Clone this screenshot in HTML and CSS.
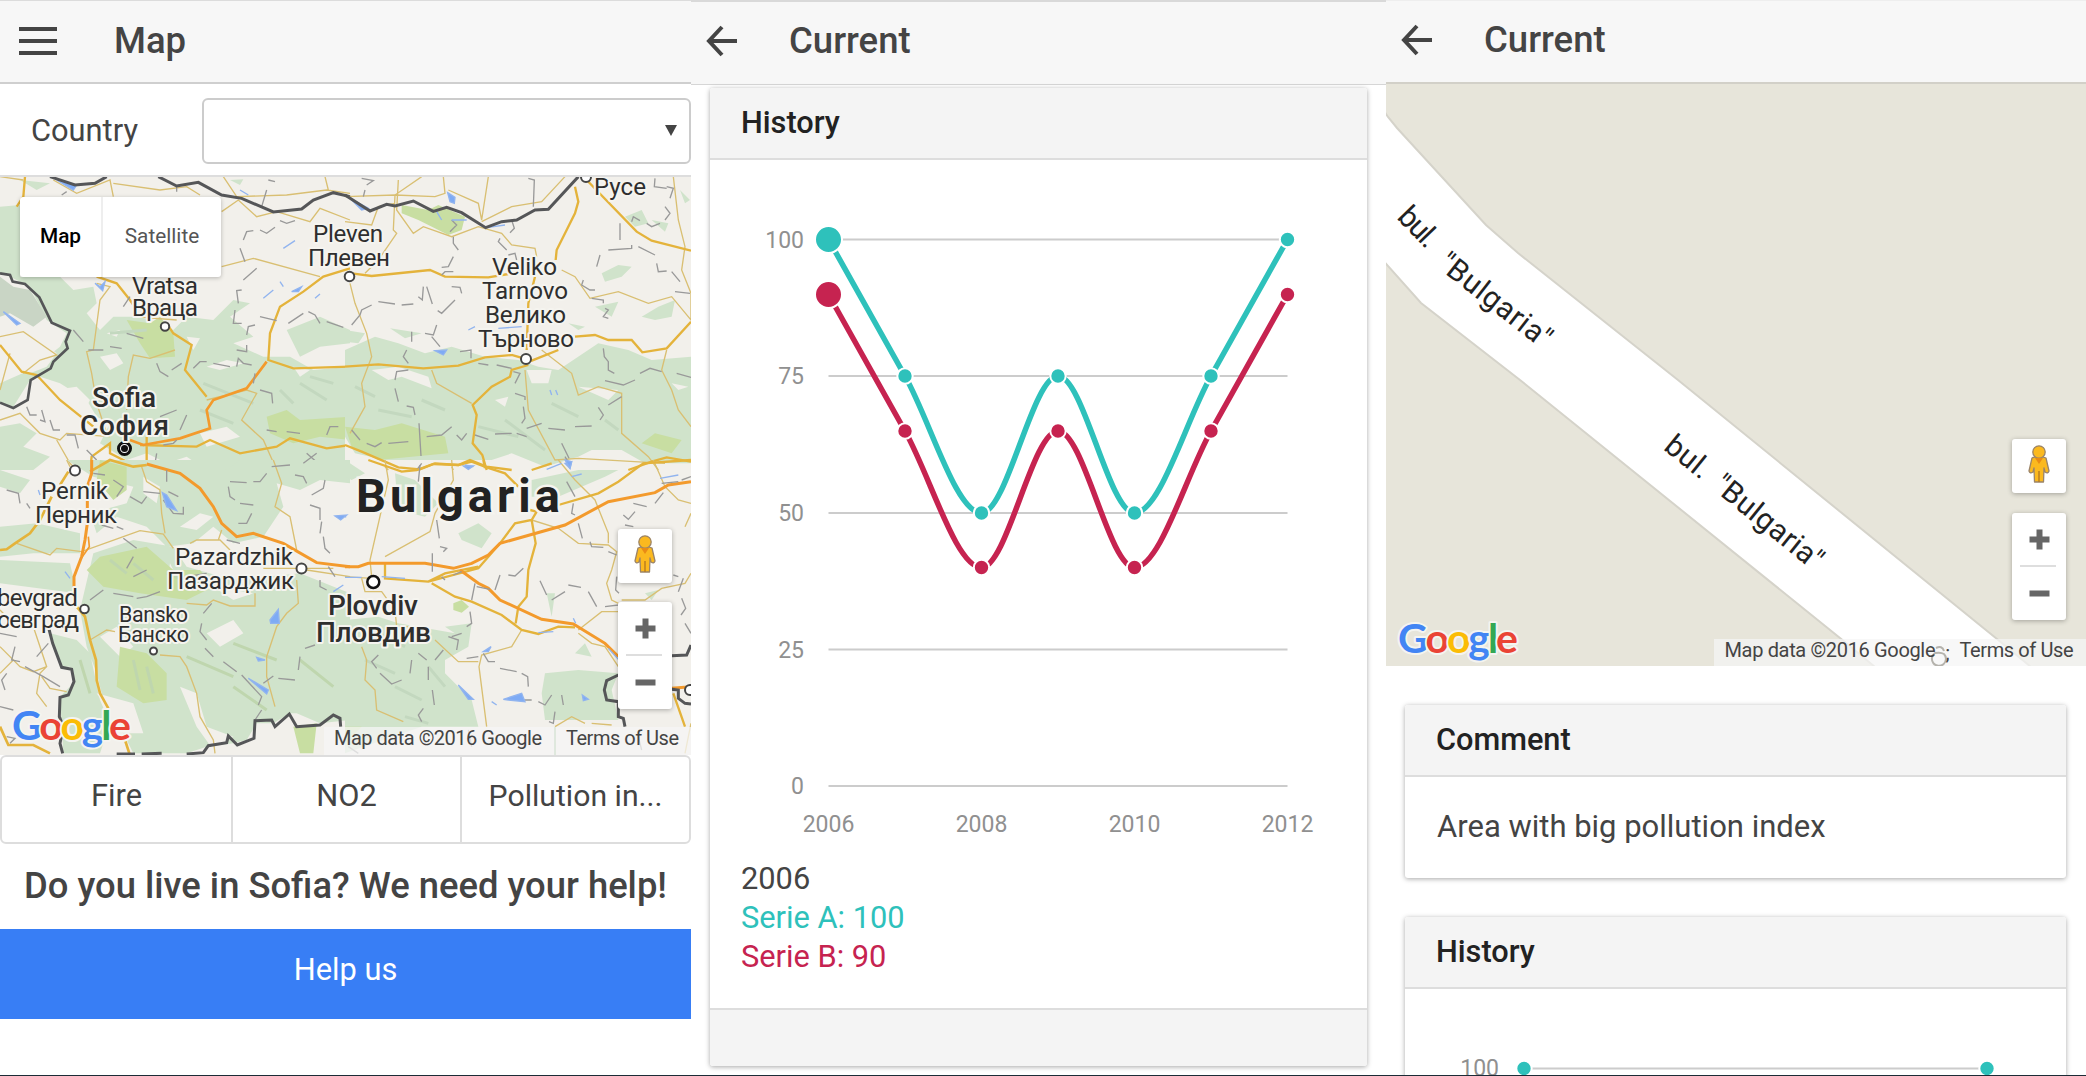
FILE: index.html
```html
<!DOCTYPE html>
<html lang="en">
<head>
<meta charset="utf-8">
<title>Pollution map</title>
<link rel="stylesheet" href="styles.css">
</head>
<body>
<svg class="defs" width="0" height="0" aria-hidden="true">
  <symbol id="back" viewBox="0 0 32 32"><path d="M31 16H3M16 2 3 16 16 30" fill="none" stroke="#444" stroke-width="4"/></symbol>
  <symbol id="pegman" viewBox="0 0 54 54">
    <g fill="#fbb91f" stroke="#9b8468" stroke-width="1.3" stroke-linejoin="round">
      <path d="M20 19q7-3 14 0l3 13q-1 3-4 1l-1-4-.5 14h-9L22 29l-1 4q-3 2-4-1z"/>
      <circle cx="27" cy="13" r="6.2"/>
    </g>
    <path d="M23 19h8l-4 6z" fill="#e98b15"/><path d="M27 32v11" stroke="#b57a22" stroke-width="1.4"/>
  </symbol>
  <symbol id="zoom" viewBox="0 0 54 107">
    <path d="M17.500 26.500h20M27.500 16.500v20M17.500 80.500h20" stroke="#666" stroke-width="6"/>
    <path d="M8 53h36" stroke="#dedede" stroke-width="2"/>
  </symbol>
</svg>
<main class="screens">

  <section class="screen">
    <header class="bar">
      <svg class="burger" viewBox="0 0 38 28"><path d="M0 2h38M0 14h38M0 26h38" stroke="#444" stroke-width="4"/></svg>
      <h1 class="title title-map">Map</h1>
    </header>
    <div class="field">
      <label class="field-label" for="country">Country</label>
      <div class="select" id="country"><span class="caret"></span></div>
    </div>
    <div class="map map-country">
      <svg class="canvas" viewBox="0 177 691 578">
        <rect y="177" width="691" height="578" fill="#f2f0eb"/>
        <g transform="translate(0 170) scale(.33333)">
          <g fill="#d0e3cb">
            <path d="M0 110 60 105 60 320H180L220 360 280 350 290 400 260 430 300 480 340 440 420 440 520 480 560 440 640 450 700 390 750 400 690 440 760 500 700 520 790 560 870 560 940 600 1050 590V900H620L560 860 500 880 440 850 380 870 300 820 330 760 290 740 260 690 180 640 120 620 90 630 40 710 0 700V640L90 600 180 530 200 490 140 450 90 350 30 320 0 310z"/>
            <path d="M0 770 60 760 110 790 70 830 150 860 100 900H0zM690 30 730 28 720 45zM860 480 960 440 1050 480V520L960 530 900 560zM60 30 150 40 110 60z"/>
          </g>
          <g fill="#f2f0eb">
            <path d="M10 500 60 480 120 510 170 550 140 590 90 610 50 590zM300 560 350 550 370 580 330 600zM320 490 360 480 350 500zM620 590 680 570 730 580 660 600zM560 500 600 505 580 540zM160 660 230 650 270 690 250 730 190 700zM600 790 680 770 720 800 620 830zM880 590 930 600 900 620z"/>
          </g>
          <path d="M0 320 40 350 90 360 140 440 100 470 30 430 0 440z" fill="#c9d5c5"/>
          <path d="M380 450 450 460 480 440 520 490 525 560 450 565 420 520zM800 740 860 720 900 750 1050 740V810L960 800 880 820 810 790zM330 890 380 870 400 900z" fill="#c8dea2"/>
          <path d="M330 490 440 480M610 640 760 700M900 640 980 690M600 720 700 760M930 620 1000 640M840 660 880 700" stroke="#c3d8bf" stroke-width="9" fill="none"/>
          <g fill="none" stroke="#d9bf72" stroke-width="4">
            <path d="M0 20 70 30M160 30 230 70 330 30 340 80M340 40 480 60 560 50 600 75M670 20 710 80 860 75 980 60 1050 70M975 20 985 60M665 125 715 90 770 140 830 125 930 155 960 115 1050 150M665 290 760 265 960 320M0 500 70 485 170 555 120 570 70 610M30 550 0 660M290 340 330 350 300 390 280 540 260 545 275 610 290 700 320 790M400 440 530 450M525 540 450 565 400 555 385 620 380 720M0 750 60 730 120 790 180 810 200 790 330 800M170 810 210 880 230 900M620 690 740 660 770 670 725 750 790 810 830 900"/>
          </g>
          <g fill="none" stroke="#e4b33b" stroke-width="7">
            <path d="M75 20 70 80 50 110M290 320 350 340 390 390 410 420M500 460 520 490 575 525 555 600 620 680M0 525 65 605 110 615 180 690 280 770M420 825 590 830 630 810 720 850 830 830 870 805 980 835 1050 825M1050 295 970 320 910 365 840 410 810 490 805 570 880 595 1050 590M270 900 275 860 330 820 330 850 400 885 440 885M440 800V880"/>
          </g>
          <path d="M390 810 430 825 540 805 630 775 620 720 640 690 740 655 800 575" fill="none" stroke="#f39a2c" stroke-width="8"/>
          <g fill="none" stroke="#999" stroke-width="4">
            <path d="M730 210 740 185 760 182M780 180 800 190 825 172M840 152 860 160 885 152M720 235 735 275M770 295 730 330M725 360 710 362 715 400M705 420 700 460 725 460M740 495 745 470 765 465M780 440 830 452M865 460 910 430M925 425 945 435 960 460M980 455 1030 472M710 540 740 545 740 525M580 595 600 575 620 575M640 580 690 590M710 590 715 565 730 580 755 585M470 580 480 605 505 620M515 600 545 580M380 490 430 505M330 530 365 535M265 540 310 540M220 480 250 515M765 610 760 640M780 660 815 670 818 700M800 780 830 785M860 785 900 790M980 795 990 770 1015 770M920 850 960 885M820 890 870 885M560 735 540 780M480 740 530 720M490 825 520 820 530 810M80 710 90 735 110 735M120 750 135 755 125 720M150 750 160 780 180 780M200 795 225 795 235 835M260 840 290 870M470 850 465 880M370 410 390 380M805 30 825 35M185 75 200 65M785 110 800 60M530 45V65"/>
          </g>
          <path d="M285 340 300 350 315 335 308 362zM10 425 60 460 50 465zM170 30 230 45 220 60zM720 60 745 75M790 385 820 360M850 235 885 212M875 365 905 350 895 365zM840 335 850 350M945 385 960 372" fill="#7eabf5" stroke="#91b4ef" stroke-width="4"/>
          <path d="M150 20 225 45 285 40 320 20M475 20 530 48 595 37 665 75 725 85 820 126 905 117 940 90 1000 68 1050 80" fill="none" stroke="#555658" stroke-width="9"/>
          <path d="M0 310 30 315 38 335 75 342 118 382 155 458 210 482 197 515 203 535 160 575 152 595 92 630 83 690 40 714 0 698" fill="none" stroke="#555658" stroke-width="8"/>
        </g>
        <g transform="translate(345 170) scale(.33333)">
          <g fill="#d0e3cb">
            <path d="M0 540 90 500 160 520 240 550 320 530 420 560 520 570 580 590 640 600 760 520 850 540 920 570 1038 560V880H900L830 840 740 840 700 860 600 890 500 850 440 870H0zM0 480 60 490 40 520 0 515zM135 475 230 490 180 505zM770 310 820 285 860 290 830 320 780 335zM890 440 940 410 990 390 980 440 930 450zM750 410 820 395 800 440zM670 460 720 470 700 480zM840 140 890 120 910 160 870 170zM920 150 970 160 960 185zM1005 60 1035 90 1020 100z"/>
          </g>
          <path d="M80 600 160 590 250 620 260 655 170 620 130 630zM0 800 30 850 120 870 80 890 0 870zM545 600 620 600 610 640 560 640zM700 650 820 660 790 690zM450 690 490 680 480 710zM980 640 1030 650 1000 660z" fill="#f2f0eb"/>
          <path d="M170 105 250 120 280 105 360 140 350 180 310 195 220 150 170 130zM0 770 90 780 170 760 300 800 310 850 200 860 100 870 20 830zM890 820 930 790 1010 810 980 850z" fill="#c8dea2"/>
          <path d="M100 720 200 740M230 690 300 720M30 650 90 680M400 770 520 800M480 750 600 840M620 700 700 740M780 750 820 780" stroke="#c3d8bf" stroke-width="9" fill="none"/>
          <g fill="none" stroke="#d9bf72" stroke-width="4">
            <path d="M0 80 150 75 270 80 300 70 295 20M230 20 150 75 145 180 155 190 100 270 60 310M160 30 155 120 205 190 235 170 320 200 400 170 470 190 500 225 570 235 575 260M310 60 400 100 410 150 430 20M410 155 500 110 590 95 660 20M0 155 80 165 100 110 150 100M15 340 30 400 65 490 80 560 50 640 60 710 15 790M985 20 1000 150 1020 230 1010 300 1038 370V450L980 380 910 400 820 365 735 385 690 320 650 300M965 540 950 600 980 660 1000 720 1038 770M590 540 680 610 700 675 760 650 830 670 830 790 910 860 940 900M260 600 275 640 380 700M540 600 550 720 630 870 700 865 960 880M120 890 130 900M320 890 325 900"/>
          </g>
          <g fill="none" stroke="#e4b33b" stroke-width="7">
            <path d="M20 310 80 318 255 300 300 320 430 322 490 312M690 50 700 95 690 130 635 240 632 270M725 30 875 185 920 212 1038 242M570 320 550 400 545 540M690 500 750 495 790 510 860 510 892 547 965 535 1038 455M0 590 100 583 235 595 340 587 420 562 500 555 560 572 640 540M550 585 500 600 495 620 440 650 383 705 395 735 383 820 412 855 425 900M0 825 50 845 160 892 225 898 270 880 340 885 375 870 425 890 500 900M560 900 620 880M850 900 920 875 965 862 1038 875"/>
          </g>
          <g fill="none" stroke="#999" stroke-width="4">
            <path d="M50 25 85 32 65 45M60 60 55 80M550 25 568 30 565 110M320 150 335 165 315 185M325 200 325 220 340 240M325 260 310 290 290 292M290 315 300 305 325 305M465 205 460 215 485 240M490 255 510 250 515 270M500 150 508 175 495 188M320 350 345 352 350 370M330 390 290 430 278 422M235 350 232 390 220 380M245 350 262 402M100 395 150 402M170 405 205 402M80 405 50 420 45 435 20 465M200 485 200 515M275 465 265 495 240 490M260 500 285 530M345 545 378 540 378 565M185 540 175 560 190 580M400 580 430 585M455 585 500 595M505 605 525 610 510 640M510 670 540 680 540 690M535 710 540 745 530 760M190 600 155 605 150 630M150 655 160 695M185 708 205 712 210 735M20 780 45 810M65 820 90 830 110 818M130 820 190 815M222 760 228 858M215 900 230 880M245 800 290 795 320 770M335 795 350 810 365 790M390 795 430 808M450 792 500 790M515 790 545 800M545 775 590 760M610 775 660 780M690 770 740 768M760 712 775 735 765 750M790 705 830 680M780 632 835 645 870 630M885 610 915 595 950 605M995 610 1038 622M775 535 778 560 790 575 790 600 808 610M780 415 790 420 775 440 790 445M740 385 775 390 775 400M715 330 710 345 735 360 750 360M825 160V210M860 155 865 140 885 152M905 160 920 170 945 160M960 110 975 130 960 150M965 50 985 55 975 85M930 25 928 50 965 55M765 255 755 290M790 240 860 235 860 225M880 230 930 255M935 280 940 305 965 303M980 305 1005 335M990 365 1035 370M650 820 672 865M660 860 675 885"/>
          </g>
          <path d="M308 68 330 82 328 100 315 95zM270 542 305 540 295 555zM355 888 385 888 370 898zM660 880 680 875 675 895zM15 85 70 115 50 120zM275 125 290 150M320 150 365 150M430 172 480 165M370 480 390 470M460 475 530 470M615 660 620 675M632 660 638 675" fill="#7eabf5" stroke="#91b4ef" stroke-width="4"/>
          <path d="M0 75 75 123 125 103 150 108 205 93 265 124 305 112 350 128 422 173 470 155 515 150 570 120 610 118 700 20" fill="none" stroke="#555658" stroke-width="9"/>
        </g>
        <g transform="translate(0 460) scale(.33333)">
          <g fill="#d0e3cb">
            <path d="M0 30 90 60 60 100 0 80zM200 0 620 0 680 30 720 0 1050 0V70L960 60 900 90 830 70 850 140 790 230 700 250 640 200 580 250 500 260 440 200 350 170 290 220 270 160 380 130 400 80 280 50zM0 200 110 190 240 220 240 280 100 280 0 290zM280 280 400 240 520 260 560 320 700 360 900 340 1050 400V780L960 790 890 760 870 760 820 790 770 790 740 840 700 850 620 860 560 880 400 880 350 780 310 720 290 640 260 560 240 450zM0 300 210 310 230 400 0 370zM150 520 230 540 270 580 300 720 330 790 300 880H190L180 710 220 670 210 620 180 620z"/>
          </g>
          <path d="M430 50 480 80 470 130 430 100zM540 200 600 160 640 170 590 210zM300 530 350 500 400 560 360 590zM620 520 700 480 730 520 660 560zM290 700 400 730 430 820 370 820zM540 680 590 700 620 800 700 830 640 870 590 800zM850 260 920 330 990 350 1050 345V240L980 220zM640 380 760 400 700 420zM510 310 540 370 500 380z" fill="#f2f0eb"/>
          <path d="M300 0 380 20 380 90 340 120 290 60zM300 290 440 260 520 330 600 330 640 380 560 420 420 400 310 380 260 330zM360 560 440 580 500 640 500 720 430 730 350 680zM880 800 950 790 940 880 900 880z" fill="#c8dea2"/>
          <path d="M330 300 380 340M400 310 460 360M500 340 580 370M400 600 420 690M440 620 460 700M700 550 830 600M900 600 1000 680M560 590 700 650M700 680 800 750M240 600 270 700" stroke="#bfd6ae" stroke-width="9" fill="none"/>
          <g fill="none" stroke="#d9bf72" stroke-width="4">
            <path d="M200 0 210 20M50 250 150 285 170 265 245 275 370 230 420 212 490 222 520 265M425 20 440 65 480 90 485 160 495 220M570 250 590 240 660 240 690 270M665 210 655 240M820 0 845 70 825 140 870 170 890 270M790 325 1000 325M920 330 1050 350M560 430 620 435 640 420 690 438 765 438 765 400M890 360 895 430 860 460 830 500 800 590 800 650 825 740M270 540 320 510 345 515M480 585 540 590 560 620 590 700 600 770 640 840 645 880M0 450 20 470M100 500 140 620 120 640 110 700 140 740M0 560 60 620 100 635 140 620M125 650 150 685 200 695M0 640 40 600"/>
          </g>
          <g fill="none" stroke="#e4b33b" stroke-width="8">
            <path d="M205 35 180 75M270 35 330 0 400 20 440 15M155 110 120 180 90 220 45 250 20 268 0 270M230 440 255 470 270 540 288 600 290 660 300 700 325 745M0 800 25 855 100 855 150 880M375 840 388 880"/>
          </g>
          <path d="M275 0V40L262 80V190L255 240 245 290 222 350 222 385M440 12 540 40 600 85 640 140 665 190 710 230 760 220 850 250 950 308 1050 320" fill="none" stroke="#f39a2c" stroke-width="9"/>
          <path d="M265 230 268 260 240 300" fill="none" stroke="#f39a2c" stroke-width="5"/>
          <g fill="none" stroke="#999" stroke-width="4">
            <path d="M20 90 55 100 60 130M80 130 90 145M340 60 370 80 350 110M280 40 315 45M390 110 425 130 440 110M430 95 480 100M500 30V65M505 95 535 110M490 120 520 160 550 162V140M685 80 690 110 705 120M690 65 740 68M760 65 780 65 800 40M720 130 760 135M755 160 740 190 715 190M815 20 870 15M885 45 910 50 920 70M975 60 970 85 935 105M930 135 960 145 960 180M965 185 960 220M970 230 975 265 990 280M985 320 1005 350M960 360 960 380 980 390M370 235 410 265M400 290 380 325M400 350 440 330M270 420 310 390M340 400 400 410M410 415 440 410 480 395M560 350 620 340M610 460 635 430M605 490 600 515 620 540M615 565 640 590M670 605 710 635M725 645 785 710 775 735M790 670 820 648M835 655 885 660M900 590 895 630M915 565 945 555M765 780 785 750M350 200 370 208M305 195 340 205M45 560 35 600 60 605M110 590 145 550M0 520 50 530M20 640 5 660 15 690M0 740 40 750M75 620 130 650 180 680M20 830 45 835 30 850M680 240 720 250M910 10 950 -20"/>
          </g>
          <path d="M487 98 500 105 530 152 500 140zM810 480 835 448 838 490 812 490zM1005 168 1040 165 1022 180zM770 592 795 600 775 603zM745 655 805 690 800 702zM195 335 210 355M1000 395 1030 375M115 90 120 105" fill="#7eabf5" stroke="#91b4ef" stroke-width="4"/>
          <path d="M145 500 158 550 185 622 215 628 222 665 205 705 180 712 178 770 190 800 180 850 188 880M350 882H405M425 882 485 880M560 882 610 878 625 857 680 848 685 828 712 855 762 835 765 782 815 780 825 800 868 762 890 800 960 795 1000 765 1020 775 1022 800" fill="none" stroke="#555658" stroke-width="9"/>
        </g>
        <g transform="translate(345 460) scale(.33333)">
          <path d="M0 0 60 40 20 60 0 50zM150 40 210 60 280 130 240 170 160 150zM560 60 700 30 820 30 780 50 640 110 560 110zM340 220 400 190 440 220 410 265 350 240zM0 480 100 470 160 490 330 520 380 490 370 560 300 600 300 640 380 720 400 800H0zM300 500 380 490 360 540zM600 640 700 630 820 640 800 690 820 780 600 780 590 700zM690 580 720 550 740 590zM605 400 630 400 620 470zM900 400 940 390 920 420zM0 800 230 800 0 880z" fill="#d0e3cb"/>
          <path d="M325 430 350 420 372 440 350 458 325 450zM0 800 50 800 0 850z" fill="#c8dea2"/>
          <path d="M100 520 180 560M60 600 150 640M150 680 230 720M250 620 300 680M180 770 250 790" stroke="#c3d8bf" stroke-width="9" fill="none"/>
          <g fill="none" stroke="#d9bf72" stroke-width="4">
            <path d="M120 0 130 60 75 300 80 350M320 0 325 60 270 160 255 215 120 290M50 355 60 395 110 395 150 450 155 500 190 500M0 350 80 355M560 180 640 205 700 250 790 255 815 275 800 330 785 370 800 420 820 430M640 0 690 60 750 120 790 220V250M925 0 960 80 1000 120 1038 130M1038 160 1020 200M830 420 900 420 950 385 1020 370 1038 340M700 510 770 455 820 455M530 510 500 560 410 585 402 620 425 800M270 540 340 605 400 605M50 560 65 600 60 660 90 690 95 750 175 785M700 520 740 550 780 560 820 620M630 800 680 770 720 790M740 790 800 795M1038 790 1020 880"/>
          </g>
          <g fill="none" stroke="#e4b33b" stroke-width="7">
            <path d="M70 0 170 35 215 30 265 12 340 15 380 5 425 22 480 40 520 80M415 0 420 25M640 135 760 100 820 65 895 10 1038 0M555 150 575 155 560 180 510 190 465 250 430 290 400 325 250 365 120 355 120 310M260 370 330 410 380 425 470 465 530 510 580 522 640 500 690 502M560 180 572 250 550 330 545 410 520 440 512 490M250 365 300 340 400 320M985 700 1020 800"/>
          </g>
          <path d="M0 320H40L70 310H240L325 325 380 310 430 285 465 250 660 195 790 125 930 98 970 75 1038 65M345 330 400 370 430 385 465 420 590 478 685 492 780 550 820 590M980 685 1038 680" fill="none" stroke="#f39a2c" stroke-width="9"/>
          <g fill="none" stroke="#999" stroke-width="4">
            <path d="M225 15 220 65M275 180 283 235M285 260 305 265 295 275M262 280V335M290 350 300 360M325 345 350 335M390 370 380 420M395 380 435 388M450 390 465 345M490 345 510 348 535 325M585 362 605 405M620 420 660 395M670 375 708 382M730 395 755 440M780 440 820 435M815 350 812 390 822 400M665 65 690 110M685 130 680 160 690 165M700 190 712 235M735 245 740 260 775 262M790 275 815 285M835 165 850 178 870 155M840 195 865 200M865 130 905 140M930 130 955 98M950 70 1000 65M1038 50 1010 60M375 455 380 490 365 500M310 530 340 540 335 570M350 520 320 530M365 595 400 590M415 580 430 605 450 605M465 625 515 635M530 640 548 650 550 680M530 720 560 720M580 725 600 735 620 705M650 705 655 735M630 755 625 790 612 785M100 585 80 605 95 625M105 640 140 672 170 660M200 600 195 640M220 580 245 600M250 620 250 660M262 690 268 735M235 745 220 765 230 785M270 600 295 570M985 345 1000 350M1015 355 1000 395M1010 415 1022 445 1008 465M1020 490 1038 520M10 860 40 880M370 810 380 860M880 830 890 870"/>
          </g>
          <path d="M340 675 385 718 370 718zM475 718 530 700 540 725 490 720zM415 575 438 560 430 575zM712 705 730 718 715 722zM440 725 455 735M660 0 680 5 675 25zM360 15 385 20M685 475 692 490M605 28 650 10M680 50 710 42M110 350 180 355M0 352H50M580 518 625 515M945 55 1000 45M0 168 3 172M790 565 822 600" fill="#7eabf5" stroke="#91b4ef" stroke-width="4"/>
          <path d="M820 645 785 662 778 690 785 720 820 725V770L835 775 840 800M980 587 1025 585 1038 555M980 688 1000 690 1000 715 1020 730 1038 732" fill="none" stroke="#555658" stroke-width="9"/>
        </g>
        <g fill="#fff" stroke="#444" stroke-width="2">
          <circle cx="165" cy="326.500" r="4.200"/><circle cx="349.500" cy="276.500" r="4.800"/><circle cx="526" cy="359" r="5"/><circle cx="75" cy="470.500" r="5"/><circle cx="301.500" cy="568.500" r="5"/><circle cx="84.500" cy="609" r="4.300"/><circle cx="153.500" cy="651" r="3.500"/><circle cx="373.300" cy="582" r="6" stroke="#111" stroke-width="2.500"/><circle cx="586" cy="177" r="5"/><circle cx="690" cy="690" r="5"/>
        </g>
        <path d="M125 428v15" stroke="#222" stroke-width="3"/><circle cx="124.500" cy="448.500" r="6" fill="#fff" stroke="#111" stroke-width="3"/><circle cx="124.500" cy="448.500" r="3.500" fill="#111"/>
        <g class="places">
          <text x="594" y="195" textLength="52">Русе</text>
          <text x="313" y="241.500" textLength="70">Pleven</text><text x="308" y="265.500" textLength="82">Плевен</text>
          <text x="132" y="293.500" textLength="66">Vratsa</text><text x="132" y="316" textLength="66">Враца</text>
          <text x="492" y="275" textLength="65">Veliko</text><text x="482" y="299" textLength="86">Tarnovo</text><text x="485" y="323" textLength="81">Велико</text><text x="478" y="347" textLength="96">Търново</text>
          <text x="41" y="499" textLength="67">Pernik</text><text x="35" y="523" textLength="82">Перник</text>
          <text x="175" y="565" textLength="118">Pazardzhik</text><text x="167" y="589" textLength="127">Пазарджик</text>
          <text x="-3" y="605.500" textLength="81">bevgrad</text><text x="-3" y="628" textLength="82">оевград</text>
        </g>
        <g class="places places-small"><text x="119" y="622" textLength="69">Bansko</text><text x="118" y="642" textLength="71">Банско</text></g>
        <g class="places places-city">
          <text x="92" y="407" textLength="64">Sofia</text><text x="80" y="435" textLength="89">София</text>
          <text x="328" y="614.500" textLength="90">Plovdiv</text><text x="316" y="642" textLength="115">Пловдив</text>
        </g>
        <text class="nation" x="356" y="512" textLength="204">Bulgaria</text>
        <text class="logo" x="12" y="740" textLength="119"><tspan fill="#4285f4">G</tspan><tspan fill="#ea4335">o</tspan><tspan fill="#fbbc05">o</tspan><tspan fill="#4285f4">g</tspan><tspan fill="#34a853">l</tspan><tspan fill="#ea4335">e</tspan></text>
        <path d="M324 727h367v28H324z" fill="#f5f5f5" fill-opacity=".75"/>
        <path d="M555 727v28" stroke="#c9dcc8"/>
        <g class="credit"><text x="334" y="744.500" textLength="208">Map data ©2016 Google</text><text x="566" y="744.500" textLength="113">Terms of Use</text></g>
      </svg>
      <div class="map-type"><span class="type type-on">Map</span><span class="type">Satellite</span></div>
      <div class="controls">
        <svg class="ctl peg"><use href="#pegman"/></svg>
        <svg class="ctl zoomer"><use href="#zoom"/></svg>
      </div>
    </div>
    <div class="tabs"><span class="tab">Fire</span><span class="tab">NO2</span><span class="tab tab-long">Pollution in...</span></div>
    <h2 class="ask">Do you live in Sofia? We need your help!</h2>
    <div class="help">Help us</div>
  </section>

  <section class="screen screen-mid">
    <header class="bar bar-mid">
      <svg class="back"><use href="#back"/></svg>
      <h1 class="title">Current</h1>
    </header>
    <article class="card card-history">
      <h2 class="card-head">History</h2>
      <svg class="chart" viewBox="710 160 657 700">
        <path d="M828.500 239.500h459M828.500 376h459M828.500 513h459M828.500 649.500h459M828.500 786h459" stroke="#ccc" stroke-width="2"/>
        <g class="axis" text-anchor="end"><text x="804" y="247.500">100</text><text x="804" y="384">75</text><text x="804" y="521">50</text><text x="804" y="657.500">25</text><text x="804" y="794">0</text></g>
        <g class="axis" text-anchor="middle"><text x="828.500" y="831.500">2006</text><text x="981.500" y="831.500">2008</text><text x="1134.500" y="831.500">2010</text><text x="1287.500" y="831.500">2012</text></g>
        <g fill="none" stroke-width="5.500">
          <path stroke="#c62350" d="M828.500 294.500 905 431C930.500 476.500 956 567.500 981.500 567.500S1032.500 431 1058 431 1109 567.500 1134.500 567.500 1185.500 476.500 1211 431L1287.500 294.500"/>
          <path stroke="#2ec1bb" d="M828.500 239.500 905 376C930.500 421.500 956 513 981.500 513S1032.500 376 1058 376 1109 513 1134.500 513 1185.500 421.500 1211 376L1287.500 239.500"/>
        </g>
        <g fill="#c62350" stroke="#fff" stroke-width="2"><circle cx="828.500" cy="294.500" r="13.500"/><circle cx="905" cy="431" r="7.700"/><circle cx="981.500" cy="567.500" r="7.700"/><circle cx="1058" cy="431" r="7.700"/><circle cx="1134.500" cy="567.500" r="7.700"/><circle cx="1211" cy="431" r="7.700"/><circle cx="1287.500" cy="294.500" r="7.700"/></g>
        <g fill="#2ec1bb" stroke="#fff" stroke-width="2"><circle cx="828.500" cy="239.500" r="13.500"/><circle cx="905" cy="376" r="7.700"/><circle cx="981.500" cy="513" r="7.700"/><circle cx="1058" cy="376" r="7.700"/><circle cx="1134.500" cy="513" r="7.700"/><circle cx="1211" cy="376" r="7.700"/><circle cx="1287.500" cy="239.500" r="7.700"/></g>
      </svg>
      <div class="legend"><div>2006</div><div class="serie-a">Serie A: 100</div><div class="serie-b">Serie B: 90</div></div>
      <footer class="card-foot"></footer>
    </article>
  </section>

  <section class="screen">
    <header class="bar bar-right">
      <svg class="back"><use href="#back"/></svg>
      <h1 class="title">Current</h1>
    </header>
    <div class="map map-street">
      <svg class="canvas" viewBox="1386 84 700 582">
        <path d="M1386 84h700v582h-700z" fill="#e7e5da"/>
        <path d="M1380 105 1388 117 1397 128 1486 225 1518 253 1678 380 1997 639 2031 667H1875L1840 638 1520 380 1421 303 1380 257z" fill="#fff" stroke="#d5d3ca" stroke-width="2"/>
        <g class="street">
          <text transform="translate(1396 218) rotate(46)" textLength="44">bul.</text>
          <text transform="translate(1436.500 267) rotate(38)" textLength="134">"Bulgaria"</text>
          <text transform="translate(1662.500 449) rotate(39)" textLength="194" word-spacing="5">bul. "Bulgaria"</text>
        </g>
        <text class="logo" x="1398" y="652.500" textLength="120"><tspan fill="#4285f4">G</tspan><tspan fill="#ea4335">o</tspan><tspan fill="#fbbc05">o</tspan><tspan fill="#4285f4">g</tspan><tspan fill="#34a853">l</tspan><tspan fill="#ea4335">e</tspan></text>
        <path d="M1714 639h372v27h-372z" fill="#f5f5f5" fill-opacity=".72"/>
        <path d="M1936 648q6-3 8 3M1944 654a7 7 0 1 1-9-1q6-1 9 1" fill="none" stroke="#b5b3ad" stroke-width="2"/>
        <g class="credit"><text x="1724.500" y="656.500" textLength="211">Map data ©2016 Google</text><text x="1945.500" y="660">;</text><text x="1959.500" y="656.500" textLength="114">Terms of Use</text></g>
      </svg>
      <div class="controls controls-street">
        <svg class="ctl peg"><use href="#pegman"/></svg>
        <svg class="ctl zoomer"><use href="#zoom"/></svg>
      </div>
    </div>
    <article class="card card-comment">
      <h2 class="card-head">Comment</h2>
      <p class="card-text">Area with big pollution index</p>
    </article>
    <article class="card card-next">
      <h2 class="card-head">History</h2>
      <svg class="chart-top" viewBox="1405 988 661 88">
        <path d="M1524 1067.500h463" stroke="#ccc" stroke-width="2"/>
        <g class="axis" text-anchor="end"><text x="1499" y="1075">100</text></g>
        <g fill="#2ec1bb" stroke="#fff" stroke-width="2"><circle cx="1524" cy="1067.500" r="7.700"/><circle cx="1987" cy="1067.500" r="7.700"/></g>
      </svg>
    </article>
  </section>
</main>
</body>
</html>
```
FILE: styles.css
```css
* { box-sizing: border-box; }
body { margin: 0; background: #fff; color: #444; font: 30.800px "Roboto", "Liberation Sans", sans-serif; }
.defs { display: block; width: 0; height: 0; }
h1, h2, p { margin: 0; font-weight: 500; }
.screens { display: grid; grid-template-columns: 691px 695px 700px; height: 1076px; overflow: hidden; border-bottom: 1px solid #1c2b36; }
.screen { display: flex; flex-direction: column; min-width: 0; min-height: 0; overflow: hidden; }

.bar { display: flex; align-items: center; flex: none; height: 84px; padding: 0 0 2px 19px; background: #f7f7f7; border-top: 1px solid #dcdcdc; border-bottom: 2px solid #cfcfcf; }
.bar-mid { height: 85px; padding: 0 0 4px 15px; border-bottom: 1px solid #d6d6d6; border-top: 2px solid #d9d9d9; }
.bar-right { padding: 0 0 3px 15px; border-top-color: #eee; border-bottom-color: #d2d0c8; }
.burger { width: 38px; height: 28px; margin-right: 57px; }
.back { width: 32px; height: 32px; margin-right: 51px; }
.title { font-size: 36.500px; line-height: 42px; }

.field { display: flex; align-items: center; flex: none; height: 93px; padding: 2px 0 0 31px; border-bottom: 2px solid #ddd; }
.field-label { width: 171px; }
.select { display: flex; align-items: center; justify-content: flex-end; flex: 1; height: 66px; padding-right: 12px; border: 2px solid #ccc; border-radius: 6px; }
.caret { border: 6px solid transparent; border-top: 11px solid #444; border-bottom: 0; }

.map { position: relative; flex: none; }
.map-country { height: 578px; }
.map-street { height: 582px; }
.canvas { display: block; width: 100%; height: 100%; }
.places { font-size: 24.200px; fill: #2e2e2e; stroke: #f5f4ef; stroke-width: 4px; paint-order: stroke; stroke-linejoin: round; }
.places-small { font-size: 21.500px; }
.places-city { font-size: 28px; font-weight: 500; }
.nation { font-size: 47px; font-weight: 700; fill: #222; stroke: #f5f4ef; stroke-width: 5px; paint-order: stroke; }
.logo { font: 400 41px "Lato", sans-serif; stroke: #f4f4f0; stroke-width: 4px; paint-order: stroke; stroke-linejoin: round; }
.logo tspan { font-weight: 700; }
.credit { font-size: 20px; fill: #444; }
.street { font-size: 30px; fill: #222; }

.map-type { position: absolute; left: 20px; top: 20px; display: flex; width: 201px; height: 80px; background: #fff; border-radius: 3px; box-shadow: 0 1px 4px rgba(0,0,0,.25); font-size: 20.800px; line-height: 78px; text-align: center; }
.type { flex: 1; color: #555; }
.type-on { flex: 0 0 83px; color: #000; font-weight: 500; border-right: 2px solid #eee; }
.controls { position: absolute; left: 618px; top: 352px; display: flex; flex-direction: column; gap: 19px; }
.controls-street { left: 626px; top: 355px; gap: 20px; }
.ctl { width: 54px; background: #fff; border-radius: 3px; box-shadow: 0 1px 5px rgba(0,0,0,.3); }
.peg { height: 54px; }
.zoomer { height: 107px; }

.tabs { display: grid; grid-template-columns: 229px 229px 1fr; flex: none; width: 691px; height: 89px; border: 2px solid #ddd; border-radius: 6px; line-height: 77px; text-align: center; }
.tab + .tab { border-left: 2px solid #ddd; }
.tab { white-space: nowrap; }
.tab-long { font-size: 30.200px; }
.ask { flex: none; height: 85px; font-size: 36.400px; line-height: 84px; text-align: center; white-space: nowrap; }
.help { flex: none; height: 90px; background: #387ef5; color: #fff; line-height: 82px; text-align: center; }

.card { flex: none; background: #fff; border-radius: 3px; box-shadow: 0 1px 5px rgba(0,0,0,.35); overflow: hidden; }
.card-history { width: 657px; height: 978px; margin: 3px 0 0 19px; }
.card-comment { width: 661px; height: 173px; margin: 39px 0 0 19px; }
.card-next { width: 661px; height: 300px; margin: 39px 0 0 19px; }
.card-head { height: 72px; padding-left: 31px; background: #f4f4f4; border-bottom: 2px solid #ddd; color: #222; font-size: 30.700px; line-height: 69px; }
.card-text { padding-left: 32px; font-weight: 400; font-size: 31px; line-height: 99px; }
.chart { display: block; width: 657px; height: 700px; }
.chart-top { display: block; width: 661px; height: 88px; }
.axis { font-size: 23px; fill: #909090; }
.legend { height: 148px; padding-left: 31px; line-height: 38.800px; }
.serie-a { color: #2ec1bb; }
.serie-b { color: #c62350; }
.card-foot { height: 58px; background: #f4f4f4; border-top: 2px solid #ddd; }
```
